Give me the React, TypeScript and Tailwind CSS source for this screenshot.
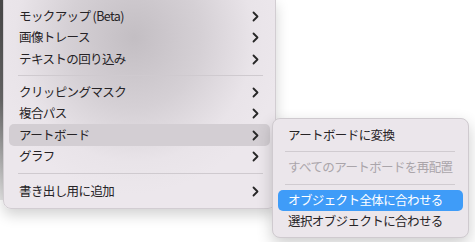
import React from "react";

const Chevron = () => (
  <svg width="7" height="11" viewBox="0 0 7 11" className="shrink-0">
    <path d="M1.5 1.5 L5.5 5.5 L1.5 9.5" fill="none" stroke="#262626" strokeWidth="1.8" strokeLinecap="round" strokeLinejoin="round" />
  </svg>
);

type Item = { label: string; sep?: false; active?: boolean } | { sep: true; h: string };

const mainItems: Item[] = [
  { label: "モックアップ (Beta)" },
  { label: "画像トレース" },
  { label: "テキストの回り込み" },
  { sep: true, h: "h-[11.5px]" },
  { label: "クリッピングマスク" },
  { label: "複合パス" },
  { label: "アートボード", active: true },
  { label: "グラフ" },
  { sep: true, h: "h-[13px]" },
  { label: "書き出し用に追加" },
];

export default function App() {
  return (
    <div
      className="relative w-[475px] h-[242px] overflow-hidden bg-white text-[12.5px] text-[#262326]"
      style={{ fontFamily: '"Noto Sans CJK JP", "Noto Sans", sans-serif' }}
    >
      <div className="absolute left-0 top-0 w-[3px] h-[200px] bg-gradient-to-b from-[#4a4a4a] via-[#6a6a6a] to-[#e8e8e8]" />
      {/* main menu */}
      <div className="absolute left-[3px] top-[-1px] w-[273px] rounded-b-[8px] border border-[#d2cdd2] bg-[radial-gradient(ellipse_55%_75%_at_48%_18%,#c3bec3_0%,#d5d0d5_45%,#e9e4e9_80%,#ece7ec_100%)] pt-[5.25px] pb-[6px] shadow-[0_6px_14px_rgba(0,0,0,0.18)]">
        {mainItems.map((it, i) =>
          it.sep ? (
            <div key={i} className={`${it.h} flex items-center pl-[14px] pr-[12px]`}>
              <div className="h-px w-full bg-[#cfcacf]" />
            </div>
          ) : (
            <div
              key={i}
              className={`mx-[5px] h-[21.5px] flex items-center justify-between pl-[10px] pr-[11px] rounded-[5px] ${it.active ? "bg-[#d3ced3]" : ""}`}
            >
              <span className="tracking-[-0.6px]">{it.label}</span>
              <Chevron />
            </div>
          )
        )}
      </div>
      {/* sub menu */}
      <div className="absolute left-[272px] top-[118px] w-[197px] rounded-[8px] border border-[#cfcacf] bg-[#ebe6eb] pt-[5.5px] pb-[4.5px] shadow-[0_6px_16px_rgba(0,0,0,0.2)]">
        <div className="mx-[5px] h-[21.5px] flex items-center pl-[10px] tracking-[-0.6px]">アートボードに変換</div>
        <div className="h-[11px] flex items-center pl-[12px] pr-[13px]"><div className="h-px w-full bg-[#d0cbd0]" /></div>
        <div className="mx-[5px] h-[21.5px] flex items-center pl-[10px] tracking-[-0.6px] text-[#aaa5aa]">すべてのアートボードを再配置</div>
        <div className="h-[11px] flex items-center pl-[12px] pr-[13px]"><div className="h-px w-full bg-[#d0cbd0]" /></div>
        <div className="mx-[5px] h-[21.5px] flex items-center pl-[10px] rounded-[5px] bg-[#3f9cf8] text-white tracking-[-0.6px]">オブジェクト全体に合わせる</div>
        <div className="mx-[5px] h-[21.5px] flex items-center pl-[10px] tracking-[-0.6px]">選択オブジェクトに合わせる</div>
      </div>
    </div>
  );
}
